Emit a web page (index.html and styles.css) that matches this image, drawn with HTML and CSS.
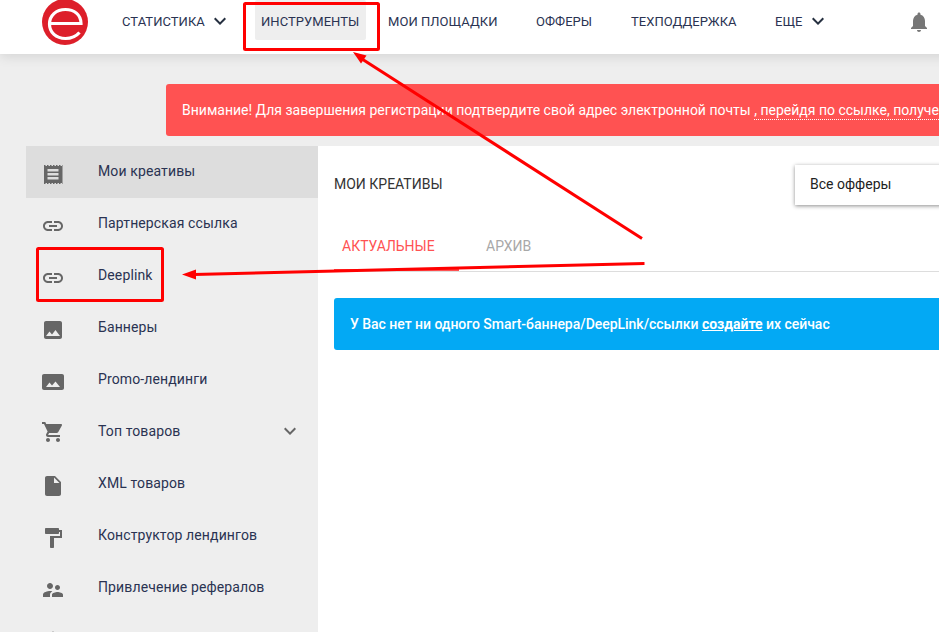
FILE: index.html
```html
<!DOCTYPE html>
<html lang="ru">
<head>
<meta charset="utf-8">
<title>Мои креативы</title>
<link rel="stylesheet" href="styles.css">
</head>
<body>
<div class="page">
  <header class="topbar">
    <svg class="logo" viewBox="0 0 48 54" width="48" height="54">
      <circle cx="24" cy="22" r="23" fill="#dd1f2a"/>
      <path d="M8.5 23.5H40C40 14.5 33 9.5 24.5 9.5C15 9.5 8.5 15.5 8.5 24C8.5 32.5 15 38.5 24.5 38.5C30 38.5 35 36.5 38.5 32.5" fill="none" stroke="#fff" stroke-width="3.2"/>
    </svg>
    <nav class="nav">
      <a class="nav-item nav-stat">Статистика<svg class="chev" viewBox="0 0 24 24" width="24" height="24"><path d="M16.59 8.59L12 13.17 7.41 8.59 6 10l6 6 6-6z"/></svg></a>
      <a class="nav-item nav-active">Инструменты</a>
      <a class="nav-item nav-sites">Мои площадки</a>
      <a class="nav-item nav-offers">Офферы</a>
      <a class="nav-item nav-support">Техподдержка</a>
      <a class="nav-item nav-more">Еще<svg class="chev" viewBox="0 0 24 24" width="24" height="24"><path d="M16.59 8.59L12 13.17 7.41 8.59 6 10l6 6 6-6z"/></svg></a>
    </nav>
    <svg class="bell" viewBox="0 0 24 24" width="24" height="24"><path d="M12 22c1.1 0 2-.9 2-2h-4c0 1.1.89 2 2 2zm6-6v-5c0-3.07-1.64-5.64-4.5-6.32V4c0-.83-.67-1.5-1.5-1.5s-1.5.67-1.5 1.5v.68C7.63 5.36 6 7.92 6 11v5l-2 2v1h16v-1l-2-2z"/></svg>
  </header>

  <div class="notice">Внимание! Для завершения регистрации подтвердите свой адрес электронной почты <span class="notice-link">, перейдя по ссылке, полученной в письме</span></div>

  <div class="columns">
    <aside class="sidebar">
      <a class="side-item side-active">
        <svg class="icon" viewBox="0 0 24 24" width="24" height="24"><path d="M3 3h1.500v1H6V3h1.500v1H9V3h1.500v1H12V3h1.500v1H15V3h1.500v1H18V3h1.500v1H21v-1h.5v19H21v-1h-1.500v1H18v-1h-1.500v1H15v-1h-1.500v1H12v-1h-1.500v1H9v-1H7.500v1H6v-1H4.500v1H3zM6.500 7v2.500h11V7zm0 4v2.500h11V11zm0 4v2.500h11V15z" fill-rule="evenodd"/></svg>
        <span>Мои креативы</span>
      </a>
      <a class="side-item">
        <svg class="icon" viewBox="0 0 24 24" width="24" height="24"><path d="M3.900 12c0-1.710 1.390-3.100 3.100-3.100h4V7H7c-2.760 0-5 2.240-5 5s2.240 5 5 5h4v-1.900H7c-1.710 0-3.100-1.390-3.100-3.100zM8 13h8v-2H8v2zm9-6h-4v1.900h4c1.710 0 3.100 1.390 3.100 3.100s-1.390 3.100-3.100 3.100h-4V17h4c2.760 0 5-2.240 5-5s-2.240-5-5-5z"/></svg>
        <span>Партнерская ссылка</span>
      </a>
      <a class="side-item">
        <svg class="icon" viewBox="0 0 24 24" width="24" height="24"><path d="M3.900 12c0-1.710 1.390-3.100 3.100-3.100h4V7H7c-2.760 0-5 2.240-5 5s2.240 5 5 5h4v-1.900H7c-1.710 0-3.100-1.390-3.100-3.100zM8 13h8v-2H8v2zm9-6h-4v1.900h4c1.710 0 3.100 1.390 3.100 3.100s-1.390 3.100-3.100 3.100h-4V17h4c2.760 0 5-2.240 5-5s-2.240-5-5-5z"/></svg>
        <span>Deeplink</span>
      </a>
      <a class="side-item">
        <svg class="icon" viewBox="0 0 24 24" width="24" height="24"><path d="M21 19V5c0-1.100-.9-2-2-2H5c-1.100 0-2 .9-2 2v14c0 1.100.9 2 2 2h14c1.100 0 2-.9 2-2zM8.500 13.500l2.500 3.010L14.500 12l4.500 6H5l3.500-4.500z"/></svg>
        <span>Баннеры</span>
      </a>
      <a class="side-item">
        <svg class="icon" viewBox="0 0 24 24" width="24" height="24"><path d="M23 18V6c0-1.100-.9-2-2-2H3c-1.100 0-2 .9-2 2v12c0 1.100.9 2 2 2h18c1.100 0 2-.9 2-2zM8.500 12.500l2.500 3.010L14.500 11.500l4.500 5.500H5l3.500-4.500z"/></svg>
        <span>Promo-лендинги</span>
      </a>
      <a class="side-item">
        <svg class="icon icon-cart" viewBox="0 0 24 24" width="24" height="24"><path d="M7 18c-1.100 0-1.990.9-1.990 2S5.900 22 7 22s2-.9 2-2-.9-2-2-2zM1 2v2h2l3.600 7.590-1.350 2.450c-.16.28-.25.61-.25.96 0 1.100.9 2 2 2h12v-2H7.420c-.14 0-.25-.11-.25-.25l.03-.12.9-1.630h7.450c.75 0 1.410-.41 1.750-1.030l3.580-6.470c.08-.14.12-.31.12-.48 0-.55-.45-1-1-1H5.210l-.94-2H1zm16 16c-1.100 0-1.990.9-1.990 2s.89 2 1.990 2 2-.9 2-2-.9-2-2-2z"/></svg>
        <span>Топ товаров</span>
        <svg class="side-chev" viewBox="0 0 24 24" width="24" height="24"><path d="M16.590 8.590L12 13.170 7.410 8.590 6 10l6 6 6-6z"/></svg>
      </a>
      <a class="side-item">
        <svg class="icon" viewBox="0 0 24 24" width="24" height="24"><path d="M6 2c-1.100 0-1.990.9-1.990 2L4 20c0 1.100.89 2 1.990 2H18c1.100 0 2-.9 2-2V8l-6-6H6zm7 7V3.500L18.500 9H13z"/></svg>
        <span>XML товаров</span>
      </a>
      <a class="side-item">
        <svg class="icon" viewBox="0 0 24 24" width="24" height="24"><path d="M18 4V3c0-.55-.45-1-1-1H5c-.55 0-1 .45-1 1v4c0 .55.45 1 1 1h12c.55 0 1-.45 1-1V6h1v4H9v11c0 .55.45 1 1 1h2c.55 0 1-.45 1-1v-9h8V4h-3z"/></svg>
        <span>Конструктор лендингов</span>
      </a>
      <a class="side-item">
        <svg class="icon" viewBox="0 0 24 24" width="24" height="24"><path d="M16.500 12c1.380 0 2.490-1.120 2.490-2.500S17.880 7 16.500 7C15.120 7 14 8.120 14 9.500s1.120 2.500 2.500 2.500zM9 11c1.660 0 2.990-1.340 2.990-3S10.660 5 9 5C7.340 5 6 6.340 6 8s1.340 3 3 3zm7.500 3c-1.830 0-5.500.92-5.500 2.750V19h11v-2.250c0-1.830-3.670-2.750-5.500-2.750zM9 13c-2.330 0-7 1.170-7 3.500V19h7v-2.250c0-.85.33-2.340 2.370-3.470C10.500 13.100 9.660 13 9 13z"/></svg>
        <span>Привлечение рефералов</span>
      </a>
      <a class="side-item">
        <svg class="icon" viewBox="0 0 24 24" width="24" height="24"><path d="M12 1l3 6H9zM5 11h14v9H5z"/></svg>
      </a>
    </aside>

    <main class="content">
      <div class="content-head">
        <h1 class="title">Мои креативы</h1>
        <div class="select">Все офферы</div>
      </div>
      <div class="tabs">
        <a class="tab tab-active">Актуальные</a>
        <a class="tab tab-archive">Архив</a>
      </div>
      <div class="info">У Вас нет ни одного Smart-баннера/DeepLink/ссылки <a class="info-link">создайте</a> их сейчас</div>
    </main>
  </div>

  <svg class="annotations" viewBox="0 0 939 632" width="939" height="632">
    <rect class="mark" x="244.500" y="3.500" width="134" height="46" rx="1"/>
    <rect class="mark" x="37.500" y="248.500" width="125" height="52" rx="1"/>
    <line class="mark" x1="642" y1="238.500" x2="362" y2="59"/>
    <polygon class="head" points="353,52 366.500,55.500 361,63.500"/>
    <line class="mark" x1="644.500" y1="263.500" x2="194" y2="274.500"/>
    <polygon class="head" points="182,274.500 196,269.500 196,279.500"/>
  </svg>
</div>
</body>
</html>
```
FILE: styles.css
```css
html, body {
  margin: 0;
  padding: 0;
  height: 632px;
  overflow: hidden;
  background: #eee;
}

body {
  font-family: Roboto, "Liberation Sans", sans-serif;
  font-size: 14px;
  color: #2a3352;
}

.page {
  position: relative;
  width: 1240px;
  height: 632px;
  overflow: hidden;
}

.topbar {
  display: flex;
  align-items: flex-start;
  height: 54px;
  padding-left: 41px;
  background: #fff;
  box-shadow: 0 2px 12px rgba(0, 0, 0, .12);
  position: relative;
}

.logo {
  flex: none;
  margin-right: 33px;
}

.nav {
  display: flex;
  align-items: flex-start;
  font-size: 13px;
  text-transform: uppercase;
  letter-spacing: .05px;
}

.nav-item {
  display: flex;
  align-items: center;
  height: 40px;
  padding-top: 2px;
  box-sizing: border-box;
  white-space: nowrap;
}

.chev {
  fill: #263040;
  margin-left: 3px;
}

.nav-stat { width: 133px; }

.nav-active {
  width: 111px;
  padding-left: 6px;
  background: #eee;
  border-radius: 2px;
}

.nav-sites { margin-left: 22px; width: 148px; }
.nav-offers { width: 95px; }
.nav-support { width: 144px; }

.bell {
  fill: #777;
  margin: 10px 0 0 77px;
  flex: none;
}

.notice {
  margin: 30px 0 0 166px;
  height: 52px;
  padding-left: 16px;
  line-height: 52px;
  background: #ff5252;
  color: #fff;
  border-radius: 3px 0 0 3px;
  white-space: nowrap;
}

.notice-link {
  border-bottom: 1px dotted #fff;
  padding-bottom: 1px;
}

.columns {
  display: flex;
  margin: 10px 0 0 26px;
}

.sidebar {
  width: 292px;
  flex: none;
}

.side-item {
  display: flex;
  align-items: center;
  height: 52px;
  padding-left: 15px;
  padding-bottom: 2px;
  box-sizing: border-box;
  white-space: nowrap;
  letter-spacing: .12px;
}

.side-active { background: #ddd; }

.icon {
  flex: none;
  fill: #666;
  margin: 6px 33px 0 0;
}

.icon-cart { margin-top: 2px; }

.side-chev {
  flex: none;
  fill: #666;
  margin-left: auto;
  margin-right: 16px;
}

.content {
  flex: 1;
  min-height: 486px;
  padding: 0 16px;
  background: #fff;
}

.content-head {
  display: flex;
  align-items: center;
  height: 78px;
  padding-bottom: 2px;
  box-sizing: border-box;
  position: relative;
}

.title {
  margin: 0;
  font-size: 14px;
  font-weight: 400;
  text-transform: uppercase;
  color: #333;
}

.select {
  position: absolute;
  left: 461px;
  top: 19px;
  width: 300px;
  height: 40px;
  padding-left: 15px;
  line-height: 38px;
  box-sizing: border-box;
  background: #fff;
  color: #222;
  box-shadow: 0 1px 4px rgba(0, 0, 0, .45);
}

.tabs {
  display: flex;
  height: 47px;
  border-bottom: 1px solid #ddd;
  text-transform: uppercase;
}

.tab {
  display: block;
  box-sizing: border-box;
  height: 47px;
  padding-top: 14px;
}

.tab-active {
  width: 125px;
  padding-left: 8px;
  color: #ff5252;
  border-bottom: 2px solid #ff5252;
}

.tab-archive {
  margin-left: 27px;
  color: #a8a8a8;
}

.info {
  margin-top: 26px;
  height: 52px;
  padding-left: 16px;
  line-height: 52px;
  font-size: 14px;
  font-weight: 500;
  letter-spacing: -.03px;
  color: #fff;
  background: #03a9f4;
  border-radius: 3px 0 0 3px;
  white-space: nowrap;
}

.info-link {
  font-weight: 700;
  text-decoration: underline;
}

.annotations {
  position: absolute;
  left: 0;
  top: 0;
  pointer-events: none;
}

.mark {
  fill: none;
  stroke: #f00;
  stroke-width: 3;
}

.head { fill: #f00; }
```
